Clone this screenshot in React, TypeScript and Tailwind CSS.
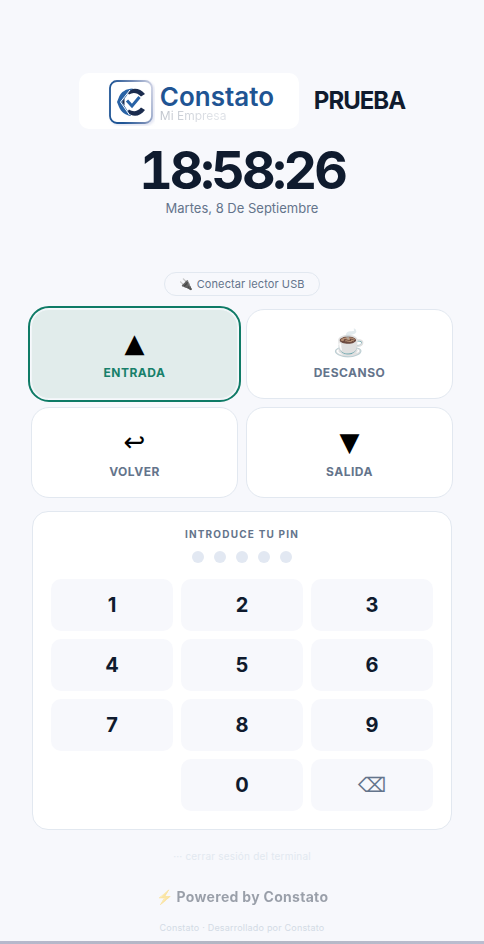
import { useState } from "react";

const actions = [
  { id: "entrada", icon: "▲", label: "Entrada" },
  { id: "descanso", icon: "☕", label: "Descanso" },
  { id: "volver", icon: "↩", label: "Volver" },
  { id: "salida", icon: "▼", label: "Salida" },
];

const digits = ["1", "2", "3", "4", "5", "6", "7", "8", "9", "0"];
const PIN_LENGTH = 5;

function Logo() {
  return (
    <div className="flex h-14 w-[220px] items-center gap-[5px] rounded-[10px] bg-white pl-7">
      <svg className="mt-0.5 h-12 w-12 shrink-0" viewBox="0 0 48 48" fill="none" aria-hidden="true">
        <defs>
          <linearGradient id="frame" x1="0" y1="0.3" x2="1" y2="0">
            <stop offset="0.1" stopColor="#1f5595" />
            <stop offset="0.55" stopColor="#7189b4" />
            <stop offset="1" stopColor="#cfd3e5" />
          </linearGradient>
          <filter id="glow" x="-20%" y="-20%" width="140%" height="140%">
            <feGaussianBlur stdDeviation="1.4" />
          </filter>
        </defs>
        <rect x="5" y="5" width="41" height="41" rx="7" stroke="#d5d9ec" strokeWidth="2.5" filter="url(#glow)" />
        <rect x="3" y="3" width="42" height="42" rx="7" fill="#fff" stroke="url(#frame)" strokeWidth="1.8" />
        <path d="M20 14C25 9 33 9.500 38 16L34 18.500C30 14.500 26 14 22 16.500Z" fill="#1b2c4e" />
        <path d="M20 34C25 39.500 33 39 38 32L34 29.500C30 34 26 34 22 31.500Z" fill="#1b2c4e" />
        <path d="M26 10.500C19 10.500 14 14 12 19L10 24L12 29C14 34 19 37.500 24 38L19.500 31L15 24L19.500 18L22 13.500Z" fill="#2862a5" />
        <path d="M23 12L13.500 24L22.500 37" stroke="#fff" strokeWidth="1" />
        <path d="M15 24L17.500 20.500V27.500Z" fill="#1b2c4e" />
        <path d="M20 22.500L25 28L32.500 19" stroke="#2862a5" strokeWidth="3" />
      </svg>
      <div className="flex flex-col pt-1 font-['Inter',sans-serif]">
        <span className="text-[26px] leading-[26px] font-semibold text-[#205493]">Constato</span>
        <span className="bg-linear-to-r from-[#bfc4cc] via-[#e2e5ea] to-[#bdc3ce] bg-clip-text text-xs leading-3 text-transparent">
          Mi Empresa
        </span>
      </div>
    </div>
  );
}

export default function App() {
  const [selected, setSelected] = useState("entrada");
  const [pin, setPin] = useState("");

  return (
    <div className="flex min-h-screen flex-col bg-[#f7f8fc] font-['Inter',sans-serif] text-[#0f1b2e]">
      <main className="mx-auto flex w-full max-w-[484px] grow flex-col items-center px-8 pt-[73px]">
        <header className="flex flex-col items-center">
          <div className="flex items-center gap-[15px]">
            <Logo />
            <h1 className="text-2xl font-bold tracking-[-1px]">PRUEBA</h1>
          </div>
          <time className="mt-4 text-[52px] leading-[52px] font-bold tracking-[-3px] tabular-nums">18:58:26</time>
          <p className="mt-[3px] text-[13px] leading-4 text-[#64748b]">Martes, 8 De Septiembre</p>
        </header>

        <button
          type="button"
          className="mt-14 h-6 rounded-full border border-[#e2e8f0] px-3.5 text-[11px] leading-4 tracking-[0.1px] text-[#64748b]"
        >
          🔌 Conectar lector USB
        </button>

        <div className="-mx-px mt-[13px] grid grid-cols-2 grid-rows-[90px_91px] gap-2 self-stretch">
          {actions.map(({ id, icon, label }) => (
            <button
              key={id}
              type="button"
              aria-pressed={selected === id}
              onClick={() => setSelected(id)}
              className={`flex flex-col items-center justify-center gap-1.5 rounded-[18px] border ${
                selected === id
                  ? "border-[#f1f6f8] bg-[#e1eceb] text-[#17806a] outline-2 outline-offset-1 outline-[#0f7b66]"
                  : "border-[#e2e8f0] bg-white text-[#64748b]"
              }`}
            >
              <span
                className={`text-[26px] leading-8 text-black ${
                  id === "descanso" ? "font-['Noto_Color_Emoji',sans-serif]" : "font-['DejaVu_Sans',sans-serif]"
                }`}
              >
                {icon}
              </span>
              <span className="text-xs leading-4 font-bold tracking-[0.5px] uppercase">{label}</span>
            </button>
          ))}
        </div>

        <section className="mt-[13px] flex w-full flex-col items-center rounded-2xl border border-[#e2e8f0] bg-white px-[18px] pt-3.5 pb-[18px]">
          <h2 className="text-[10px] leading-4 font-bold tracking-[1.2px] text-[#64748b] uppercase">
            Introduce tu PIN
          </h2>
          <div className="mt-[9px] flex gap-2.5" role="status" aria-label="PIN">
            {Array.from({ length: PIN_LENGTH }, (_, i) => (
              <span key={i} className={`size-3 rounded-full ${i < pin.length ? "bg-[#0f7b66]" : "bg-[#e2e8f2]"}`} />
            ))}
          </div>
          <div className="mt-4 grid w-full grid-cols-3 gap-2">
            {digits.map((d) => (
              <button
                key={d}
                type="button"
                onClick={() => setPin((p) => (p + d).slice(0, PIN_LENGTH))}
                className={`h-13 rounded-[10px] bg-[#f7f8fc] text-xl font-bold ${d === "0" ? "col-start-2" : ""}`}
              >
                {d}
              </button>
            ))}
            <button
              type="button"
              aria-label="Borrar"
              onClick={() => setPin((p) => p.slice(0, -1))}
              className="h-13 rounded-[10px] bg-[#f7f8fc] font-['DejaVu_Sans',sans-serif] text-xl text-[#64748b]"
            >
              ⌫
            </button>
          </div>
        </section>

        <button type="button" className="mt-[18px] text-[10px] leading-4 tracking-[0.2px] text-[#e2e8f0]">
          ··· cerrar sesión del terminal
        </button>
        <footer className="flex flex-col items-center">
          <p className="mt-[23px] text-sm leading-5 font-bold tracking-[0.3px] opacity-40">⚡ Powered by Constato</p>
          <p className="mt-[13px] text-[9px] leading-4 tracking-[0.2px] text-[#d3dbe5]">
            Constato · Desarrollado por Constato
          </p>
        </footer>
      </main>
      <div className="h-[3px] bg-linear-to-r from-[#b6b8cc] via-[#b3b6c3] to-[#bbbdd0]" />
    </div>
  );
}
